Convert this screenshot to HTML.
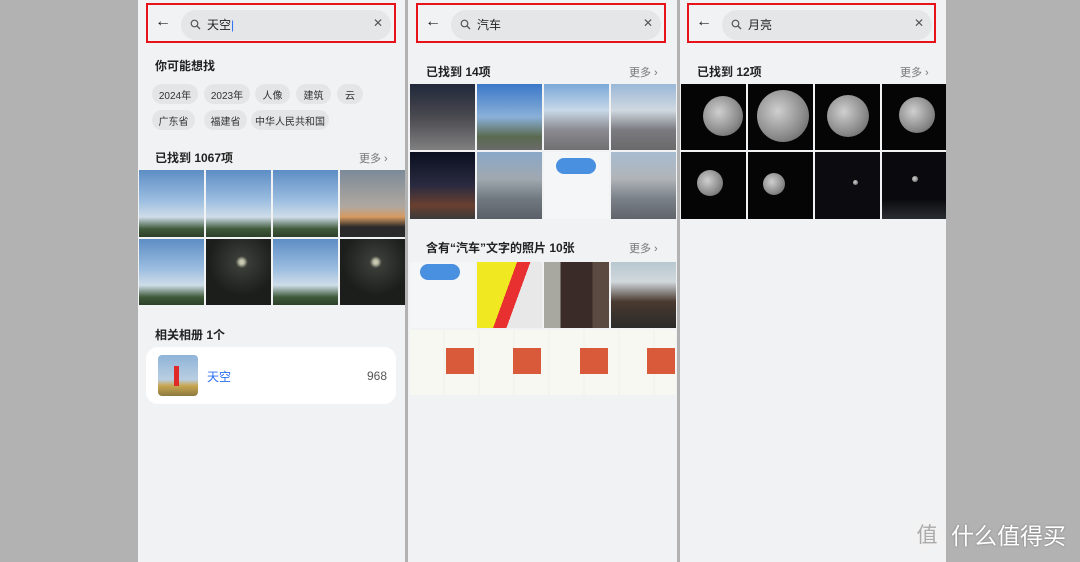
<!DOCTYPE html>
<html><head><meta charset="utf-8"><style>
*{margin:0;padding:0;box-sizing:border-box}
body{width:1080px;height:562px;background:#b2b2b2;position:relative;overflow:hidden;font-family:"Liberation Sans","Noto Sans CJK SC",sans-serif;color:#222}
.p{position:absolute;top:0;height:562px;background:#f1f2f4}
.a{position:absolute}
.red{position:absolute;border:2px solid #e8121a}
.sb{position:absolute;height:30px;border-radius:15px;background:#e5e6e8}
.t{position:absolute;white-space:nowrap}
.chip{position:absolute;height:20px;border-radius:10px;background:#e4e5e7;font-size:10px;display:flex;align-items:center;justify-content:center;color:#333}
.more{position:absolute;font-size:11px;color:#777}
.sky{background:linear-gradient(#5d8dc4 0%,#9bbde0 45%,#cfdde9 70%,#3f5a3a 88%,#2c3f2a 100%)}
.dark{background:radial-gradient(circle at 55% 35%,#c8c8b0 0 2px,#3a3c38 6px,#1c1e1c 60%)}
.moon{background:#050505}
.moon::after{content:"";position:absolute;border-radius:50%;background:radial-gradient(circle at 40% 40%,#cfcfcf,#8a8a8a 60%,#555)}
.mg{position:absolute;width:11px;height:11px}
</style></head><body>
<svg width="0" height="0" style="position:absolute"><defs><symbol id="mg" viewBox="0 0 11 11"><circle cx="4.5" cy="4.5" r="3.3" fill="none" stroke="#555" stroke-width="1.2"/><path d="M7 7L10 10" stroke="#555" stroke-width="1.3"/></symbol></defs></svg>
<!-- panel 1 -->
<div class="p" style="left:138px;width:267px"></div>
<div class="red" style="left:146px;top:3px;width:250px;height:40px"></div>
<div class="t" style="left:155px;top:13px;font-size:16px;color:#222">←</div>
<div class="sb" style="left:181px;top:10px;width:210px"></div>
<svg class="mg" style="left:190px;top:19px"><use href="#mg"/></svg>
<div class="t" style="left:207px;top:16px;font-size:12px">天空<span style="color:#2a6ef0">|</span></div>
<div class="t" style="left:373px;top:16px;font-size:12px;color:#555">✕</div>
<div class="t" style="left:155px;top:57px;font-size:12px;font-weight:bold">你可能想找</div>
<div class="chip" style="left:152px;top:84px;width:46px">2024年</div>
<div class="chip" style="left:204px;top:84px;width:46px">2023年</div>
<div class="chip" style="left:255px;top:84px;width:35px">人像</div>
<div class="chip" style="left:296px;top:84px;width:35px">建筑</div>
<div class="chip" style="left:337px;top:84px;width:26px">云</div>
<div class="chip" style="left:152px;top:110px;width:43px">广东省</div>
<div class="chip" style="left:204px;top:110px;width:43px">福建省</div>
<div class="chip" style="left:251px;top:110px;width:78px">中华人民共和国</div>
<div class="t" style="left:155px;top:149px;font-size:12px;font-weight:bold">已找到 1067项</div>
<div class="more" style="left:359px;top:150px">更多 ›</div>
<div class="a sky" style="left:139px;top:170px;width:65px;height:67px"></div>
<div class="a sky" style="left:206px;top:170px;width:65px;height:67px"></div>
<div class="a sky" style="left:273px;top:170px;width:65px;height:67px"></div>
<div class="a" style="left:340px;top:170px;width:65px;height:67px;background:linear-gradient(#7c8a98,#b0a8a0 55%,#d89a60 70%,#2a2a2a 85%)"></div>
<div class="a sky" style="left:139px;top:239px;width:65px;height:66px"></div>
<div class="a dark" style="left:206px;top:239px;width:65px;height:66px"></div>
<div class="a sky" style="left:273px;top:239px;width:65px;height:66px"></div>
<div class="a dark" style="left:340px;top:239px;width:65px;height:66px"></div>
<div class="t" style="left:155px;top:326px;font-size:12px;font-weight:bold">相关相册 1个</div>
<div class="a" style="left:146px;top:347px;width:250px;height:57px;background:#fff;border-radius:12px"></div>
<div class="a" style="left:158px;top:355px;width:40px;height:41px;border-radius:4px;background:linear-gradient(#8fb3d8 0%,#b9cfe2 60%,#c9a650 75%,#8a7a40 100%)"></div>
<div class="a" style="left:174px;top:366px;width:5px;height:20px;background:#e02a2a"></div>
<div class="t" style="left:207px;top:368px;font-size:12px;color:#2a6ef0">天空</div>
<div class="t" style="left:367px;top:369px;font-size:12px;color:#555">968</div>
<!-- panel 2 -->
<div class="p" style="left:408px;width:269px"></div>
<div class="red" style="left:416px;top:3px;width:250px;height:40px"></div>
<div class="t" style="left:425px;top:13px;font-size:16px">←</div>
<div class="sb" style="left:451px;top:10px;width:210px"></div>
<svg class="mg" style="left:460px;top:19px"><use href="#mg"/></svg>
<div class="t" style="left:477px;top:16px;font-size:12px">汽车</div>
<div class="t" style="left:643px;top:16px;font-size:12px;color:#555">✕</div>
<div class="t" style="left:426px;top:63px;font-size:12px;font-weight:bold">已找到 14项</div>
<div class="more" style="left:629px;top:64px">更多 ›</div>
<div class="a" style="left:410px;top:84px;width:65px;height:66px;background:linear-gradient(#20283a,#4a4a50 50%,#808080)"></div>
<div class="a" style="left:477px;top:84px;width:65px;height:66px;background:linear-gradient(#3a78c8,#8ab0d8 50%,#5a6a50 80%,#6a6a6a)"></div>
<div class="a" style="left:544px;top:84px;width:65px;height:66px;background:linear-gradient(#7aa8d8,#c8d8e8 40%,#8a8a90 70%,#707070)"></div>
<div class="a" style="left:611px;top:84px;width:65px;height:66px;background:linear-gradient(#9ab8d8,#d0d8e0 40%,#7a7a80 70%,#6a6a6a)"></div>
<div class="a" style="left:410px;top:152px;width:65px;height:67px;background:linear-gradient(#0a1020,#2a2a40 50%,#6a4030 80%,#3a3a3a)"></div>
<div class="a" style="left:477px;top:152px;width:65px;height:67px;background:linear-gradient(#8aa8c8,#a0a8b0 40%,#707880 70%,#5a6068)"></div>
<div class="a" style="left:544px;top:152px;width:65px;height:67px;background:#f4f6f8"></div>
<div class="a" style="left:556px;top:158px;width:40px;height:16px;border-radius:8px;background:#4a90e0"></div>
<div class="a" style="left:611px;top:152px;width:65px;height:67px;background:linear-gradient(#a8bcd0,#b0b4b8 40%,#7a8088 70%,#60646a)"></div>
<div class="t" style="left:426px;top:239px;font-size:12px;font-weight:bold">含有“汽车”文字的照片 10张</div>
<div class="more" style="left:629px;top:240px">更多 ›</div>
<div class="a" style="left:410px;top:262px;width:65px;height:66px;background:#f4f6f8"></div>
<div class="a" style="left:420px;top:264px;width:40px;height:16px;border-radius:8px;background:#4a90e0"></div>
<div class="a" style="left:477px;top:262px;width:65px;height:66px;background:linear-gradient(110deg,#f0e820 0 45%,#e83030 45% 60%,#e8e8e8 60%)"></div>
<div class="a" style="left:544px;top:262px;width:65px;height:66px;background:linear-gradient(90deg,#a8a8a0 0 25%,#3a2a28 25% 75%,#5a4a40 75%)"></div>
<div class="a" style="left:611px;top:262px;width:65px;height:66px;background:linear-gradient(#b8c8d0,#d0d8dc 30%,#4a3a30 60%,#2a2a2a)"></div>
<div class="a" style="left:410px;top:330px;width:266px;height:65px;background:repeating-linear-gradient(90deg,#f8f8f2 0 33px,#f4f4ee 33px 35px)"></div>
<div class="a" style="left:446px;top:348px;width:28px;height:26px;background:#d85a3a"></div>
<div class="a" style="left:513px;top:348px;width:28px;height:26px;background:#d85a3a"></div>
<div class="a" style="left:580px;top:348px;width:28px;height:26px;background:#d85a3a"></div>
<div class="a" style="left:647px;top:348px;width:28px;height:26px;background:#d85a3a"></div>
<!-- panel 3 -->
<div class="p" style="left:680px;width:266px"></div>
<div class="red" style="left:687px;top:3px;width:249px;height:40px"></div>
<div class="t" style="left:696px;top:13px;font-size:16px">←</div>
<div class="sb" style="left:722px;top:10px;width:210px"></div>
<svg class="mg" style="left:731px;top:19px"><use href="#mg"/></svg>
<div class="t" style="left:748px;top:16px;font-size:12px">月亮</div>
<div class="t" style="left:914px;top:16px;font-size:12px;color:#555">✕</div>
<div class="t" style="left:697px;top:63px;font-size:12px;font-weight:bold">已找到 12项</div>
<div class="more" style="left:900px;top:64px">更多 ›</div>
<style>
.m1::after{left:22px;top:12px;width:40px;height:40px}
.m2::after{left:9px;top:6px;width:52px;height:52px}
.m3::after{left:12px;top:11px;width:42px;height:42px}
.m4::after{left:17px;top:13px;width:36px;height:36px}
.m5::after{left:16px;top:18px;width:26px;height:26px}
.m6::after{left:15px;top:21px;width:22px;height:22px}
.m7::after{left:38px;top:28px;width:5px;height:5px}
.m8::after{left:30px;top:24px;width:6px;height:6px}
</style>
<div class="a moon m1" style="left:681px;top:84px;width:65px;height:66px"></div>
<div class="a moon m2" style="left:748px;top:84px;width:65px;height:66px"></div>
<div class="a moon m3" style="left:815px;top:84px;width:65px;height:66px"></div>
<div class="a moon m4" style="left:882px;top:84px;width:64px;height:66px"></div>
<div class="a moon m5" style="left:681px;top:152px;width:65px;height:67px"></div>
<div class="a moon m6" style="left:748px;top:152px;width:65px;height:67px"></div>
<div class="a moon m7" style="left:815px;top:152px;width:65px;height:67px;background:#0c0c10"></div>
<div class="a moon m8" style="left:882px;top:152px;width:64px;height:67px;background:linear-gradient(#0a0a0e 70%,#2a2e34)"></div>
<!-- watermark -->
<div class="a" style="left:911px;top:518px;width:32px;height:32px;border-radius:50%;background:#f2f2f2;color:#aaa;font-size:21px;line-height:32px;text-align:center;font-family:'Noto Sans CJK SC',sans-serif">值</div>
<div class="t" style="left:951px;top:519px;font-size:23px;color:#fff;font-family:'Noto Sans CJK SC',sans-serif;line-height:30px;text-shadow:0 0 2px #777">什么值得买</div>
</body></html>
